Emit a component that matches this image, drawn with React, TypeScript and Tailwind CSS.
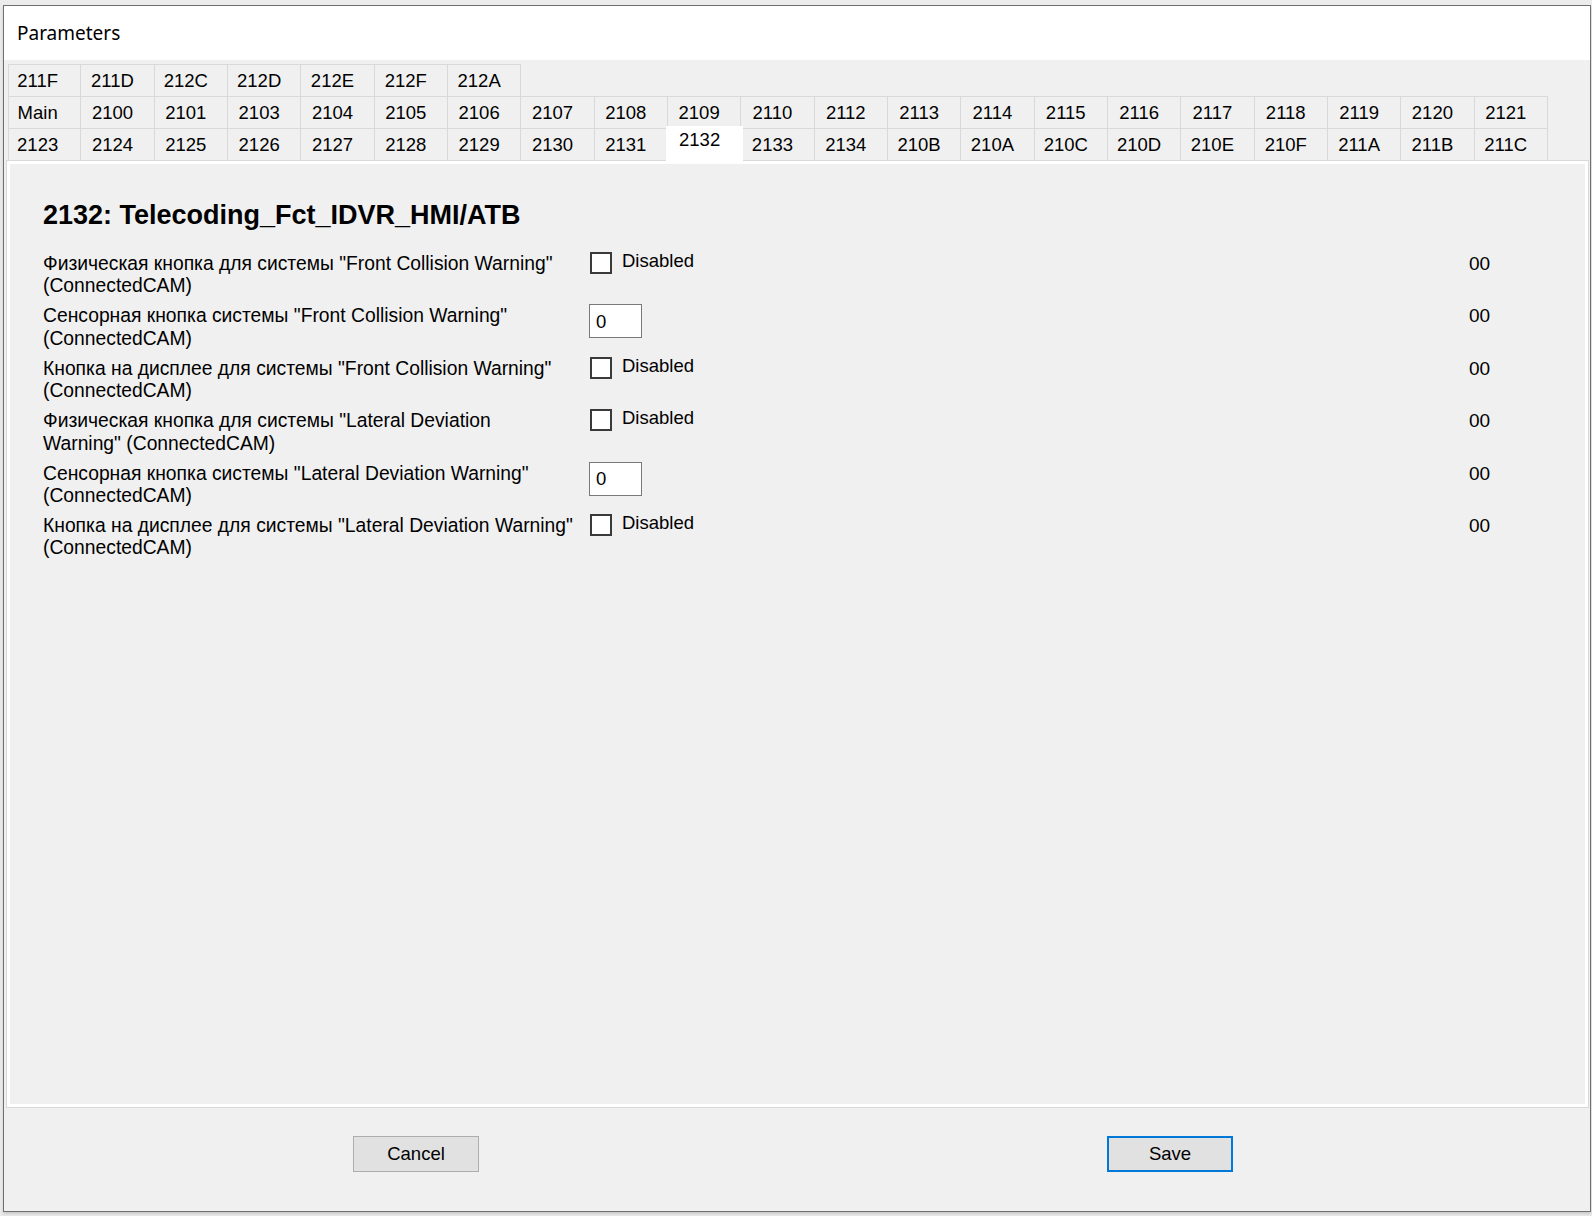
import React from "react";

const tabRows: string[][] = [
  ["211F", "211D", "212C", "212D", "212E", "212F", "212A"],
  ["Main", "2100", "2101", "2103", "2104", "2105", "2106", "2107", "2108", "2109", "2110", "2112", "2113", "2114", "2115", "2116", "2117", "2118", "2119", "2120", "2121"],
  ["2123", "2124", "2125", "2126", "2127", "2128", "2129", "2130", "2131", "2132", "2133", "2134", "210B", "210A", "210C", "210D", "210E", "210F", "211A", "211B", "211C"],
];

const activeTab = "2132";

type Param = {
  lines: [string, string];
  kind: "check" | "text";
  value: string;
};

const params: Param[] = [
  { lines: ['Физическая кнопка для системы "Front Collision Warning"', "(ConnectedCAM)"], kind: "check", value: "00" },
  { lines: ['Сенсорная кнопка системы "Front Collision Warning"', "(ConnectedCAM)"], kind: "text", value: "00" },
  { lines: ['Кнопка на дисплее для системы "Front Collision Warning"', "(ConnectedCAM)"], kind: "check", value: "00" },
  { lines: ['Физическая кнопка для системы "Lateral Deviation', 'Warning" (ConnectedCAM)'], kind: "check", value: "00" },
  { lines: ['Сенсорная кнопка системы "Lateral Deviation Warning"', "(ConnectedCAM)"], kind: "text", value: "00" },
  { lines: ['Кнопка на дисплее для системы "Lateral Deviation Warning"', "(ConnectedCAM)"], kind: "check", value: "00" },
];

function Tab({ label }: { label: string }) {
  if (label === activeTab) {
    return (
      <div className="relative z-10 -mx-[2px] -mt-[2px] -mb-[1px] flex h-[35px] items-start justify-center bg-white pt-[3px] pr-[10px] leading-[22px]">
        {label}
      </div>
    );
  }
  return (
    <div className="flex h-[32px] items-center justify-center border-t border-r border-[#d9d9d9] pr-[10px] first:border-l first:pr-[14px]">
      {label}
    </div>
  );
}

function ParamRow({ p }: { p: Param }) {
  return (
    <div className="flex h-[52.4px] items-start">
      <div className="w-[546px] whitespace-nowrap text-[19.3px] leading-[22.4px]">
        <div>{p.lines[0]}</div>
        <div>{p.lines[1]}</div>
      </div>
      <div className="w-[880px]">
        {p.kind === "check" ? (
          <div className="flex items-start">
            <span className="ml-px -mt-px h-[22px] w-[22px] border-2 border-[#3a3a3a] bg-white" />
            <span className="-mt-[3px] ml-[10px] leading-[22.4px]">Disabled</span>
          </div>
        ) : (
          <div className="-mt-px flex h-[34px] w-[53px] items-center border border-[#7a7a7a] bg-white pl-[6px]">0</div>
        )}
      </div>
      <div className="text-[19px] leading-[22.4px]">{p.value}</div>
    </div>
  );
}

export default function App() {
  return (
    <div
      className="h-[1216px] w-[1592px] bg-[#ececec] pt-[5px] pl-[3px] text-[18.5px] text-black"
      style={{ fontFamily: '"Liberation Sans", Arial, sans-serif' }}
    >
      <div className="flex h-[1207px] w-[1588px] flex-col border border-[#6f6f6f] shadow-[0_2px_3px_rgba(0,0,0,0.15)]">
        {/* title bar */}
        <div className="flex h-[54px] items-center bg-white pl-[13px] text-[19px] font-['Noto_Sans',sans-serif]">
          Parameters
        </div>

        <div className="flex flex-1 flex-col bg-[#f0f0f0] pl-[2px] pr-px">
          {/* tab strip, three rows */}
          <div className="ml-[2px] pt-[4px]">
            {tabRows.map((row, i) => (
              <div key={i} className="grid grid-cols-[repeat(21,73.33px)]">
                {row.map((t) => (
                  <Tab key={t} label={t} />
                ))}
              </div>
            ))}
          </div>

          {/* tab page */}
          <div className="h-[948px] border border-[#d9d9d9] bg-white p-[3px]">
            <div className="h-full bg-[#f0f0f0] pl-[33px] pt-[36px]">
              <h1 className="text-[27px] font-bold leading-[31px]">2132: Telecoding_Fct_IDVR_HMI/ATB</h1>
              <div className="mt-[22px]">
                {params.map((p, i) => (
                  <ParamRow key={i} p={p} />
                ))}
              </div>
            </div>
          </div>

          {/* dialog buttons */}
          <div className="flex pt-[28px]">
            <button className="ml-[347px] h-[36px] w-[126px] border border-[#adadad] bg-[#e1e1e1]">Cancel</button>
            <button className="ml-[628px] h-[36px] w-[126px] border-2 border-[#0078d7] bg-[#e1e1e1]">Save</button>
          </div>
        </div>
      </div>
    </div>
  );
}
